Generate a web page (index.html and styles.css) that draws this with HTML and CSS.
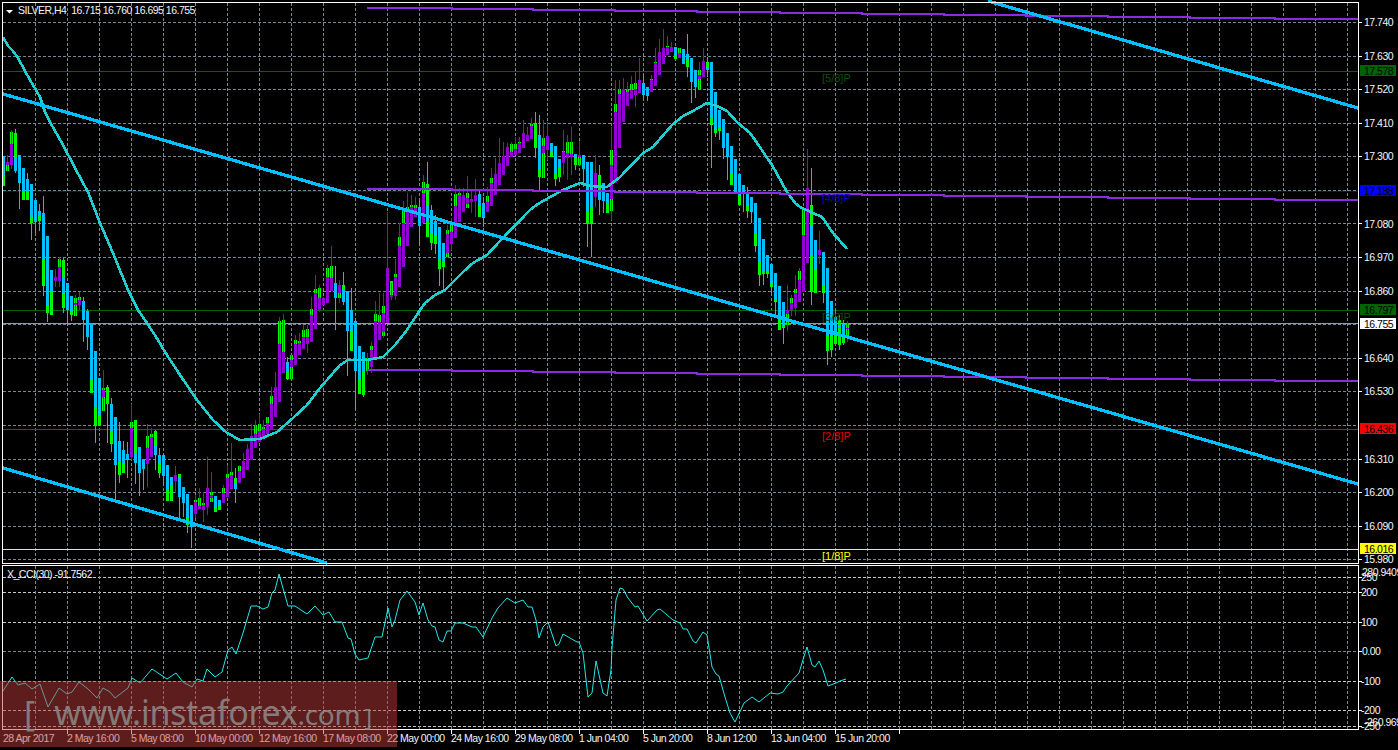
FILE: index.html
```html
<!DOCTYPE html>
<html lang="en">
<head>
<meta charset="utf-8">
<title>SILVER,H4</title>
<link rel="stylesheet" href="styles.css">
</head>
<body>
<main class="terminal">
<svg class="chart" width="1398" height="750" viewBox="0 0 1398 750">
  <g id="grid"></g>
  <g class="levels">
    <path class="lv-green" d="M3 71.5H1358"/>
    <path class="lv-blue" d="M3 191.5H1358"/>
    <path class="lv-green" d="M3 310.5H1358"/>
    <path class="lv-price" d="M3 323.5H1358"/>
    <path class="lv-red" d="M3 429.5H1358"/>
    <path class="lv-yellow" d="M3 549.5H1358"/>
  </g>
  <g id="candles"></g>
  <polyline class="ma" points="3,37 8,46 13,51 18,58 25,71 33,85 40,97 45,112 50,122 63,145 75,168 88,192 100,223 113,253 128,290 138,310 147,323 158,340 165,352 180,375 197,400 213,420 227,433 240,440 260,439 277,432 293,418 307,405 320,388 340,365 348,360 367,360 383,357 395,345 407,330 420,310 425,303 435,295 445,290 463,272 473,263 487,255 500,241 530,210 538,204 550,197 563,190 580,183 590,186 607,187 620,177 643,153 653,147 672,125 683,116 693,111 707,103 717,106 727,111 737,122 750,133 755,140 772,165 787,192 795,203 800,207 813,213 822,217 833,233 847,249"/>
  <g class="violet">
    <path d="M367 8H452V9H533V10H615V11H697V12H780V13H862V14H944V15H1026V16H1108V17H1190V18H1275V19H1358"/>
    <path d="M367 189H452V190H533V191H615V192H697V193H780V194H862V195H944V196H1026V197H1108V198H1190V199H1275V200H1358"/>
    <path d="M367 370H452V371H533V372H615V373H697V374H780V375H862V376H944V377H1026V378H1108V379H1190V380H1275V381H1358"/>
  </g>
  <g class="trend">
    <line x1="3" y1="94" x2="1358" y2="484"/>
    <line x1="988" y1="1" x2="1358" y2="108"/>
    <line x1="3" y1="468" x2="327" y2="563"/>
  </g>
  <g class="levels-text">
    <text class="tx-green" x="822" y="82">[5/8]P</text>
    <text class="tx-blue" x="822" y="202">[4/8]P</text>
    <text class="tx-green" x="822" y="321">[3/8]P</text>
    <text class="tx-red" x="822" y="440">[2/8]P</text>
    <text class="tx-yellow" x="822" y="560">[1/8]P</text>
  </g>
  <polyline class="cci" points="3,691 12,677 18,685 25,683 32,689 40,684 48,707 59,688 67,694 72,692 79,682 88,689 97,698 103,688 110,692 115,698 128,688 132,678 140,683 152,669 167,679 176,673 183,682 192,687 197,679 203,681 207,669 215,677 222,672 228,650 232,647 236,654 243,633 251,606 257,606 263,609 268,607 272,593 275,590 279,574 288,606 295,606 307,614 315,606 323,615 329,612 335,622 342,622 348,638 351,639 355,654 359,660 368,658 375,637 382,637 388,608 392,627 395,620 400,600 407,591 415,602 419,615 423,603 428,620 432,626 435,627 439,640 443,642 447,631 451,631 455,623 463,623 472,627 476,627 483,637 492,618 498,608 507,598 515,603 523,600 528,607 532,607 536,620 539,638 543,627 548,622 556,646 559,644 563,634 577,642 579,642 583,653 588,697 592,693 596,661 603,693 607,696 611,670 612,648 616,600 620,588 623,589 628,598 635,607 638,606 647,621 657,610 660,609 673,620 680,623 683,629 687,629 693,641 696,643 703,632 707,635 712,667 716,674 719,676 725,697 730,713 735,722 744,703 752,697 759,702 770,693 778,694 783,692 787,686 799,673 802,663 807,647 812,665 815,667 819,661 823,670 828,686 836,683 840,681 846,679"/>
  <g class="frames">
    <rect x="2.5" y="2.5" width="1356" height="561"/>
    <rect x="2.5" y="565.5" width="1356" height="164"/>
  </g>
  <g id="ticks"></g>
  <polygon class="menu-arrow" points="6,10 13,10 9.5,13.5"/>
  <text class="label" x="18" y="14">SILVER,H4&#160;&#160;16.715 16.760 16.695 16.755</text>
  <text class="label" x="7" y="578">X_CCI(30) -91.7562</text>
  <g class="axis">
    <text x="1364" y="26">17.740</text>
    <text x="1364" y="60">17.630</text>
    <text x="1364" y="93">17.520</text>
    <text x="1364" y="127">17.410</text>
    <text x="1364" y="160">17.300</text>
    <text x="1364" y="228">17.080</text>
    <text x="1364" y="261">16.970</text>
    <text x="1364" y="295">16.860</text>
    <text x="1364" y="362">16.640</text>
    <text x="1364" y="395">16.530</text>
    <text x="1364" y="463">16.310</text>
    <text x="1364" y="496">16.200</text>
    <text x="1364" y="530">16.090</text>
    <text x="1364" y="563">15.980</text>
  </g>
  <g class="tags">
    <rect class="tag-green" x="1360" y="65" width="36" height="11"/><text x="1364" y="75">17.578</text>
    <rect class="tag-blue" x="1360" y="185" width="36" height="11"/><text x="1364" y="195">17.188</text>
    <rect class="tag-green" x="1360" y="304" width="36" height="11"/><text x="1364" y="314">16.797</text>
    <rect class="tag-white" x="1360" y="318" width="36" height="11"/><text x="1364" y="328">16.755</text>
    <rect class="tag-red" x="1360" y="423" width="36" height="11"/><text x="1364" y="433">16.436</text>
    <rect class="tag-yellow" x="1360" y="543" width="36" height="11"/><text x="1364" y="553">16.016</text>
  </g>
  <g class="axis">
    <text x="1361" y="581">250</text>
    <text x="1362" y="576">280.9409</text>
    <text x="1361" y="596">200</text>
    <text x="1361" y="626">100</text>
    <text x="1362" y="655">0.00</text>
    <text x="1361" y="685">-100</text>
    <text x="1361" y="714">-200</text>
    <text x="1361" y="730">-250</text>
    <text x="1364" y="726">-260.969</text>
  </g>
  <g class="axis">
    <text x="3" y="742">28 Apr 2017</text>
    <text x="67" y="742">2 May 16:00</text>
    <text x="131" y="742">5 May 08:00</text>
    <text x="195" y="742">10 May 00:00</text>
    <text x="259" y="742">12 May 16:00</text>
    <text x="323" y="742">17 May 08:00</text>
    <text x="387" y="742">22 May 00:00</text>
    <text x="451" y="742">24 May 16:00</text>
    <text x="515" y="742">29 May 08:00</text>
    <text x="579" y="742">1 Jun 04:00</text>
    <text x="643" y="742">5 Jun 20:00</text>
    <text x="707" y="742">8 Jun 12:00</text>
    <text x="771" y="742">13 Jun 04:00</text>
    <text x="835" y="742">15 Jun 20:00</text>
  </g>
</svg>
<aside class="watermark">
  <span class="wm-open">[</span>
  <span class="wm-site">www.instaforex<span class="wm-tld">.com</span></span>
  <span class="wm-close">]</span>
</aside>
</main>
<script src="chart.js"></script>
</body>
</html>
```
FILE: styles.css
```css
html, body {
  margin: 0;
  height: 100%;
  background: #000;
  overflow: hidden;
}
.terminal {
  position: relative;
  width: 1398px;
  height: 750px;
}
.chart {
  display: block;
  font-family: "Liberation Sans", Arial, sans-serif;
}
.chart text {
  font-size: 10.5px;
  letter-spacing: -0.5px;
  fill: #f2f6fa;
}
.grid-line {
  stroke: #778899;
  stroke-width: 1;
  stroke-dasharray: 3 2;
  fill: none;
  shape-rendering: crispEdges;
}
.grid-white {
  stroke: #c8c8c8;
}
.levels path {
  stroke-width: 1;
  fill: none;
  shape-rendering: crispEdges;
}
.lv-green { stroke: #006400; }
.lv-blue { stroke: #0000cd; }
.lv-price { stroke: #8a9aaa; }
.lv-red { stroke: #e00000; }
.lv-yellow { stroke: #ffff00; }

.c-p { fill: #9400d3; }
.c-b { fill: #00bfff; }
.c-g { fill: #00ff00; }
#candles rect { shape-rendering: crispEdges; }

.ma {
  fill: none;
  stroke: #20d0d0;
  stroke-width: 2.6;
  shape-rendering: crispEdges;
}
.violet path {
  fill: none;
  stroke: #8a2be2;
  stroke-width: 2;
  shape-rendering: crispEdges;
}
.trend line {
  stroke: #00bfff;
  stroke-width: 3.3;
  shape-rendering: crispEdges;
}
.cci {
  fill: none;
  stroke: #1fe8e8;
  stroke-width: 1;
}
.frames rect {
  fill: none;
  stroke: #fff;
  stroke-width: 1;
  shape-rendering: crispEdges;
}
.tick {
  stroke: #fff;
  stroke-width: 1;
  shape-rendering: crispEdges;
}
.menu-arrow { fill: #fff; }
.chart .levels-text text { font-size: 11px; letter-spacing: 0; }
.chart .tx-green { fill: #0b4f0b; }
.chart .tx-blue { fill: #0000cd; }
.chart .tx-red { fill: #e00000; }
.chart .tx-yellow { fill: #ffff00; }
.tags rect { shape-rendering: crispEdges; }
.tag-green { fill: #006400; }
.tag-blue { fill: #0000ff; }
.tag-white { fill: #fff; }
.tag-red { fill: #ff0000; }
.tag-yellow { fill: #ffff00; }
.chart .tags text { fill: #000; }

.watermark {
  position: absolute;
  left: 0;
  top: 681px;
  width: 397px;
  height: 66px;
  background: rgba(192, 59, 59, 0.49);
  display: flex;
  align-items: center;
  padding-left: 24px;
  box-sizing: border-box;
  color: rgba(140, 140, 140, 0.85);
  font-family: "Noto Sans", "Open Sans", sans-serif;
  white-space: nowrap;
  line-height: 1;
}
.wm-open {
  font-size: 34px;
  margin-bottom: 2px;
}
.wm-close {
  font-size: 24px;
  margin: 6px 0 0 4px;
}
.wm-site {
  font-size: 34px;
  margin: 0 0 4px 19px;
  letter-spacing: -0.3px;
}
.wm-tld {
  font-size: 28px;
}
```
FILE: chart.js
```js
// k, high, low, bodyTop, bodyBottom, greenTop, greenBottom
var BARS = [
['b',156,186,156,175,175,186],['p',155,171,162,165,165,171],['p',130,169,144,165,132,144],['b',129,173,158,171,133,158],
['b',155,209,155,183],['b',168,200,168,192,192,200],['b',173,200,179,192,192,200],['b',184,240,184,217,217,223],
['b',200,233,200,222],['b',204,231,211,216,216,221],['b',196,296,213,260,260,286],['b',236,322,236,305,305,313],
['b',270,315,270,291,291,315],['p',269,287,277,281,277,281],['p',257,287,267,281,259,267],['b',257,313,277,293,260,308],
['b',283,323,283,310],['b',296,321,296,311,311,315],['p',295,316,303,305,298,316],['p',292,310,300,305,297,300],
['b',297,342,301,320],['b',309,350,311,337],['b',323,393,323,379,379,393],['b',351,443,351,407,407,426],
['b',378,426,378,415,415,426],['p',370,411,390,397,388,411],['b',385,443,0,0,387,404],['b',398,452,404,431,431,444],
['b',417,501,417,465],['b',422,483,441,462,462,475],['b',441,473,450,463,463,473],['b',442,478,454,460],
['p',404,460,428,457,422,428],['b',420,484,453,463,420,463],['b',447,496,447,473],['b',459,490,459,469],
['p',424,487,448,464,436,448],['p',428,457,437,457,434,437],['b',430,470,446,455,431,446],['b',448,478,455,463,463,473],
['b',455,485,455,476],['b',465,501,465,490,490,501],['b',477,501,477,485,485,501],['p',466,493,475,481],
['b',474,520,478,497,474,478],['b',487,517,487,503],['b',494,533,494,517,517,525],['b',505,548,505,527],
['p',495,518,502,514,500,502],['p',488,509,506,509,498,506],['p',492,522,505,510,503,510],['p',457,515,488,507],
['p',472,502,495,498,492,502],['b',496,512,496,507,507,512],['b',500,510,500,505,505,510],['p',485,503,493,503,488,493],
['p',465,497,478,497,474,478],['p',443,489,475,489,472,475],['b',468,503,484,489,478,484],['p',465,483,471,483,466,471],
['p',453,478,461,478],['p',444,470,449,470],['p',424,460,436,460],['p',420,448,434,448,425,434],
['p',414,442,431,442,424,431],['p',420,438,429,438,427,429],['p',417,434,423,434,417,423],['p',387,430,404,430,396,404],
['p',372,417,387,417],['p',317,402,344,402,321,344],['p',314,373,352,373,320,352],['b',357,380,362,372,372,379],
['p',355,379,360,367,355,379],['p',335,365,344,365,340,344],['p',333,355,343,355,341,343],['p',325,349,337,349,330,337],
['p',325,353,337,344,329,337],['p',297,342,315,342,309,315],['p',275,329,293,329,289,293],['p',285,312,298,310,288,298],
['p',297,305,298,305],['p',265,303,277,303,268,277],['p',246,291,278,291,266,278],['b',266,330,283,298],
['p',280,303,285,293,293,298],['b',272,305,290,302,285,290],['b',291,376,291,331],['b',288,351,310,331,331,351],
['b',321,410,321,371],['b',346,394,346,379,379,394],['b',352,397,352,371,371,395],['p',353,375,0,0,358,371],
['p',342,373,350,367,346,350],['p',301,360,321,359,314,321],['p',293,340,322,340,315,322],['p',293,338,313,332,306,336],
['p',212,323,268,323],['p',283,300,295,297,281,295],['p',259,300,277,296,274,277],['p',223,287,246,287,237,246],
['p',201,267,223,267,210,223],['p',193,246,210,246,207,210],['p',195,227,207,227,205,207],['p',197,217,208,217,205,208],
['b',200,246,207,226],['p',175,223,193,223,182,193],['b',162,237,206,222,184,237],['b',205,250,210,233,233,243],
['b',215,254,221,235,235,244],['b',227,286,227,260,260,269],['b',243,289,243,262,262,267],['p',225,257,234,253,230,257],
['p',218,250,232,244,224,232],['p',185,238,206,238,194,206],['p',188,222,195,222,193,195],['p',188,212,195,212],
['p',176,208,198,204,193,208],['p',190,213,199,202],['p',179,217,195,201],['b',190,217,194,205,205,217],
['b',197,227,203,218],['p',187,212,202,212,196,202],['p',168,206,183,206,178,183],['p',158,195,174,195],
['p',138,185,163,185],['p',142,175,156,175],['p',143,166,147,166],['p',142,157,152,157,144,152],
['p',137,155,149,155,144,149],['p',137,153,143,153,142,143],['p',120,148,133,148],['p',127,141,135,141],
['p',118,139,126,139,124,126],['b',112,158,0,0,123,148],['b',115,190,135,170,170,177],['p',120,178,146,153,138,178],
['p',122,160,136,150],['b',143,157,143,152,152,157],['b',146,186,146,173,173,179],['b',159,182,159,168,168,177],
['p',130,175,152,163,151,152],['p',135,180,153,158,142,153],['p',127,175,154,157,142,154],['b',154,170,154,158,158,165],
['p',141,165,155,157,157,165],['b',155,187,155,169],['b',162,247,162,212,212,224],['b',162,257,162,207,207,224],
['p',155,207,173,197],['b',165,215,190,200,175,190],['b',183,213,183,201],['b',193,213,193,204,204,213],
['p',127,220,165,199,150,211],['p',80,183,112,183,104,112],['p',80,148,94,148,89,94],['p',78,122,89,122],
['p',82,106,92,106,89,92],['p',76,99,90,99,84,90],['p',72,107,89,95,83,89],['p',58,93,80,93],
['b',75,100,83,95],['b',87,101,87,96],['p',75,92,80,92,79,80],['p',48,86,63,86,62,63],
['p',39,75,52,75],['p',29,64,48,64],['p',36,55,47,55,46,47],['p',42,52,47,52],
['b',47,59,47,55,55,59],['p',48,58,53,58,48,58],['b',49,64,49,64],['b',34,77,54,59,59,67],
['b',58,103,58,82],['b',70,98,70,87],['p',62,89,75,79,70,89],['p',48,77,61,77],
['b',57,77,68,70,62,68],['b',62,168,62,118,118,125],['b',92,137,92,129,129,133],['b',110,140,110,128,128,131],
['b',119,159,119,148],['b',133,180,133,157],['b',146,185,146,173,173,185],['b',159,192,159,192],
['b',174,205,174,195,195,205],['b',185,212,185,192],['b',187,218,192,205,205,211],['b',197,223,197,212],
['b',203,252,203,234,234,246],['b',218,286,218,262,262,275],['b',239,285,239,271,271,274],['b',255,278,255,271,271,274],
['b',264,295,264,284,284,287],['b',273,315,273,299,299,302],['b',286,330,286,320,320,330],['b',302,344,302,326,326,328],
['p',285,331,310,314,314,325],['p',295,316,303,310,298,303],['p',275,316,293,308,289,293],['p',268,302,280,302,271,280],
['p',208,292,235,292,208,235],['p',149,263,188,263],['b',168,305,225,255,205,292],['b',240,293,240,269,269,293],
['p',231,264,250,255],['b',252,303,252,285,285,293],['b',268,365,268,335,335,351],['b',301,357,301,335,335,350],
['b',310,344,317,335,335,344],['b',315,350,325,328,320,345],['b',320,345,324,337,337,343],['p',321,342,328,329,324,337]
];

var NS = 'http://www.w3.org/2000/svg';

function el(parent, name, attrs) {
  var node = document.createElementNS(NS, name);
  Object.keys(attrs).forEach(function (k) { node.setAttribute(k, attrs[k]); });
  parent.appendChild(node);
  return node;
}

function rect(parent, cls, x, y1, y2, w) {
  if (y2 <= y1) return;
  el(parent, 'rect', { 'class': cls, x: x, y: y1, width: w, height: y2 - y1 });
}

var candles = document.getElementById('candles');
BARS.forEach(function (b, i) {
  var x = 2 + 4 * i;
  if (b[5]) rect(candles, 'c-g', x, b[5], b[6], 3);
  rect(candles, 'c-' + b[0], x + 1, b[1], b[2], 1);
  if (b[3]) rect(candles, 'c-' + b[0], x, b[3], b[4], 3);
});

var grid = document.getElementById('grid');
function hline(y, cls) {
  el(grid, 'line', { 'class': 'grid-line' + (cls || ''), x1: 3, x2: 1358, y1: y + 0.5, y2: y + 0.5 });
}
[22, 56, 89, 123, 156, 190, 223, 257, 291, 324, 358, 391, 425, 459, 492, 526, 559].forEach(function (y) { hline(y); });
[577, 592, 622, 681, 710, 726].forEach(function (y) { hline(y, ' grid-white'); });
hline(651);
for (var vx = 35; vx < 1358; vx += 32) {
  el(grid, 'line', { 'class': 'grid-line', x1: vx + 0.5, x2: vx + 0.5, y1: 3, y2: 563 });
  el(grid, 'line', { 'class': 'grid-line', x1: vx + 0.5, x2: vx + 0.5, y1: 566, y2: 729 });
}

var ticks = document.getElementById('ticks');
[22, 56, 89, 123, 156, 223, 257, 291, 358, 391, 459, 492, 526, 559, 577, 592, 622, 651, 681, 710, 726].forEach(function (y) {
  el(ticks, 'line', { 'class': 'tick', x1: 1359, x2: 1362, y1: y + 0.5, y2: y + 0.5 });
});
for (var tx = 67; tx < 1358; tx += 64) {
  if (tx > 899) break;
  el(ticks, 'line', { 'class': 'tick', x1: tx + 0.5, x2: tx + 0.5, y1: 730, y2: 734 });
}
```
